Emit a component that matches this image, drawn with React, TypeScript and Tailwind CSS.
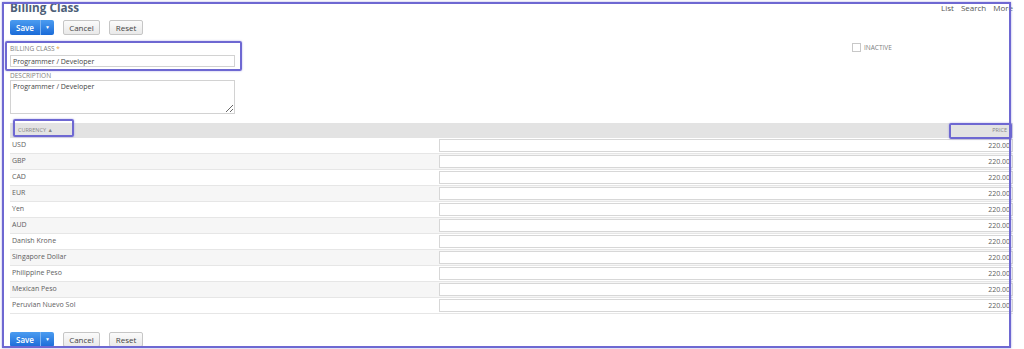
import { useState } from "react";

interface linhaMoeda {
  moeda: string;
  preco: string;
}

const moedas: linhaMoeda[] = [
  { moeda: "USD", preco: "220.00" },
  { moeda: "GBP", preco: "220.00" },
  { moeda: "CAD", preco: "220.00" },
  { moeda: "EUR", preco: "220.00" },
  { moeda: "Yen", preco: "220.00" },
  { moeda: "AUD", preco: "220.00" },
  { moeda: "Danish Krone", preco: "220.00" },
  { moeda: "Singapore Dollar", preco: "220.00" },
  { moeda: "Philippine Peso", preco: "220.00" },
  { moeda: "Mexican Peso", preco: "220.00" },
  { moeda: "Peruvian Nuevo Sol", preco: "220.00" },
];

const Botoes = () => {
  return (
    <div className="flex items-start h-[15px]">
      <div className="flex h-[15px] rounded-[2px] overflow-hidden bg-gradient-to-b from-[#4b9cf0] to-[#1a6bd8]">
        <button className="w-[30px] h-full text-white text-[8px] font-semibold leading-[15px]">
          Save
        </button>
        <div className="w-px h-full bg-[#7fb5f2]" />
        <button className="w-[13px] h-full text-white text-[5px] leading-[15px]">
          ▼
        </button>
      </div>
      <button className="ml-[9px] w-[37px] h-[15px] rounded-[2px] border border-[#c6c6c6] bg-gradient-to-b from-[#fbfbfb] to-[#e9e9e9] text-[8px] leading-[13px] text-[#444]">
        Cancel
      </button>
      <button className="ml-[9px] w-[34px] h-[15px] rounded-[2px] border border-[#c6c6c6] bg-gradient-to-b from-[#fbfbfb] to-[#e9e9e9] text-[8px] leading-[13px] text-[#444]">
        Reset
      </button>
    </div>
  );
};

const App = () => {
  const [nome, setNome] = useState("Programmer / Developer");
  const [descricao, setDescricao] = useState("Programmer / Developer");
  const [inativo, setInativo] = useState(false);

  return (
    <div className="relative w-[1024px] h-[349px] overflow-hidden bg-white font-['Open_Sans',sans-serif]">
      <div className="pl-[10px] pr-[11px]">
        <div className="flex justify-between items-start h-[20px]">
          <h1 className="text-[11.7px] leading-[15px] font-bold text-[#4d5f79]">
            Billing Class
          </h1>
          <div className="flex gap-[7px] text-[8px] leading-[14px] pt-px text-[#555]">
            <span>List</span>
            <span>Search</span>
            <span>More</span>
          </div>
        </div>

        <Botoes />

        <div className="flex items-start mt-[8px]">
          <div className="w-[225px]">
            <div className="relative mt-[2px]">
              <div className="h-[8px] text-[6.5px] leading-[8px] text-[#808080] uppercase">
                Billing Class <span className="text-[#e9a53c]">*</span>
              </div>
              <input
                className="mt-[2px] block w-full h-[12px] border border-[#d2d2d2] px-[2px] text-[7px] text-[#444] outline-none"
                value={nome}
                onChange={(e) => setNome(e.target.value)}
              />
              <div className="absolute -top-[4px] -left-[5px] -right-[7px] -bottom-[4px] rounded-[2px] border-2 border-[#6e68d2] shadow-[0_0_2px_rgba(110,104,210,0.6)]" />
            </div>
            <div className="mt-[5px] h-[8px] text-[6.5px] leading-[8px] text-[#808080] uppercase">
              Description
            </div>
            <textarea
              className="block w-full h-[34px] border border-[#d2d2d2] px-[2px] py-px text-[7px] leading-[10px] text-[#444] outline-none"
              value={descricao}
              onChange={(e) => setDescricao(e.target.value)}
            />
          </div>
          <label className="ml-[617px] flex items-center gap-[3px] text-[6.5px] text-[#808080] uppercase">
            <span
              onClick={() => setInativo(!inativo)}
              className="block w-[9px] h-[9px] border border-[#c8c8c8] bg-white"
            />
            Inactive
          </label>
        </div>

        <div className="mt-[9px]">
          <div className="flex h-[15px] bg-[#e3e3e3]">
            <div className="relative w-[428px] pl-[8px] text-[5.5px] leading-[15px] text-[#888] uppercase">
              Currency ▲
              <div className="absolute top-[-4px] left-[3px] w-[61px] h-[18px] rounded-[2px] border-2 border-[#6e68d2] shadow-[0_0_2px_rgba(110,104,210,0.6)]" />
            </div>
            <div className="relative flex-1 pr-[6px] text-right text-[5.5px] leading-[15px] text-[#888] uppercase">
              Price
              <div className="absolute top-0 right-px w-[63px] h-[16px] rounded-[2px] border-2 border-[#6e68d2] shadow-[0_0_2px_rgba(110,104,210,0.6)]" />
            </div>
          </div>
          {moedas.map((linha, i) => (
            <div
              key={linha.moeda}
              className={
                i % 2 === 1
                  ? "flex h-[16px] bg-[#f6f6f6] border-b border-[#e6e6e6]"
                  : "flex h-[16px] bg-white border-b border-[#e6e6e6]"
              }
            >
              <div className="w-[428px] pl-[2px] text-[7px] leading-[14px] text-[#5e5e5e]">
                {linha.moeda}
              </div>
              <div className="flex-1 pl-px pt-px">
                <input
                  className="block w-full h-[13px] border border-[#d7d7d7] bg-white pr-[2px] text-right text-[7px] text-[#5e5e5e] outline-none"
                  defaultValue={linha.preco}
                />
              </div>
            </div>
          ))}
        </div>

        <div className="mt-[18px]">
          <Botoes />
        </div>
      </div>

      <div className="absolute left-[2px] top-[2px] w-[1009px] h-[346px] border-2 border-[#6e68d2] shadow-[0_0_2px_rgba(110,104,210,0.6)] pointer-events-none" />
    </div>
  );
};

export default App;
